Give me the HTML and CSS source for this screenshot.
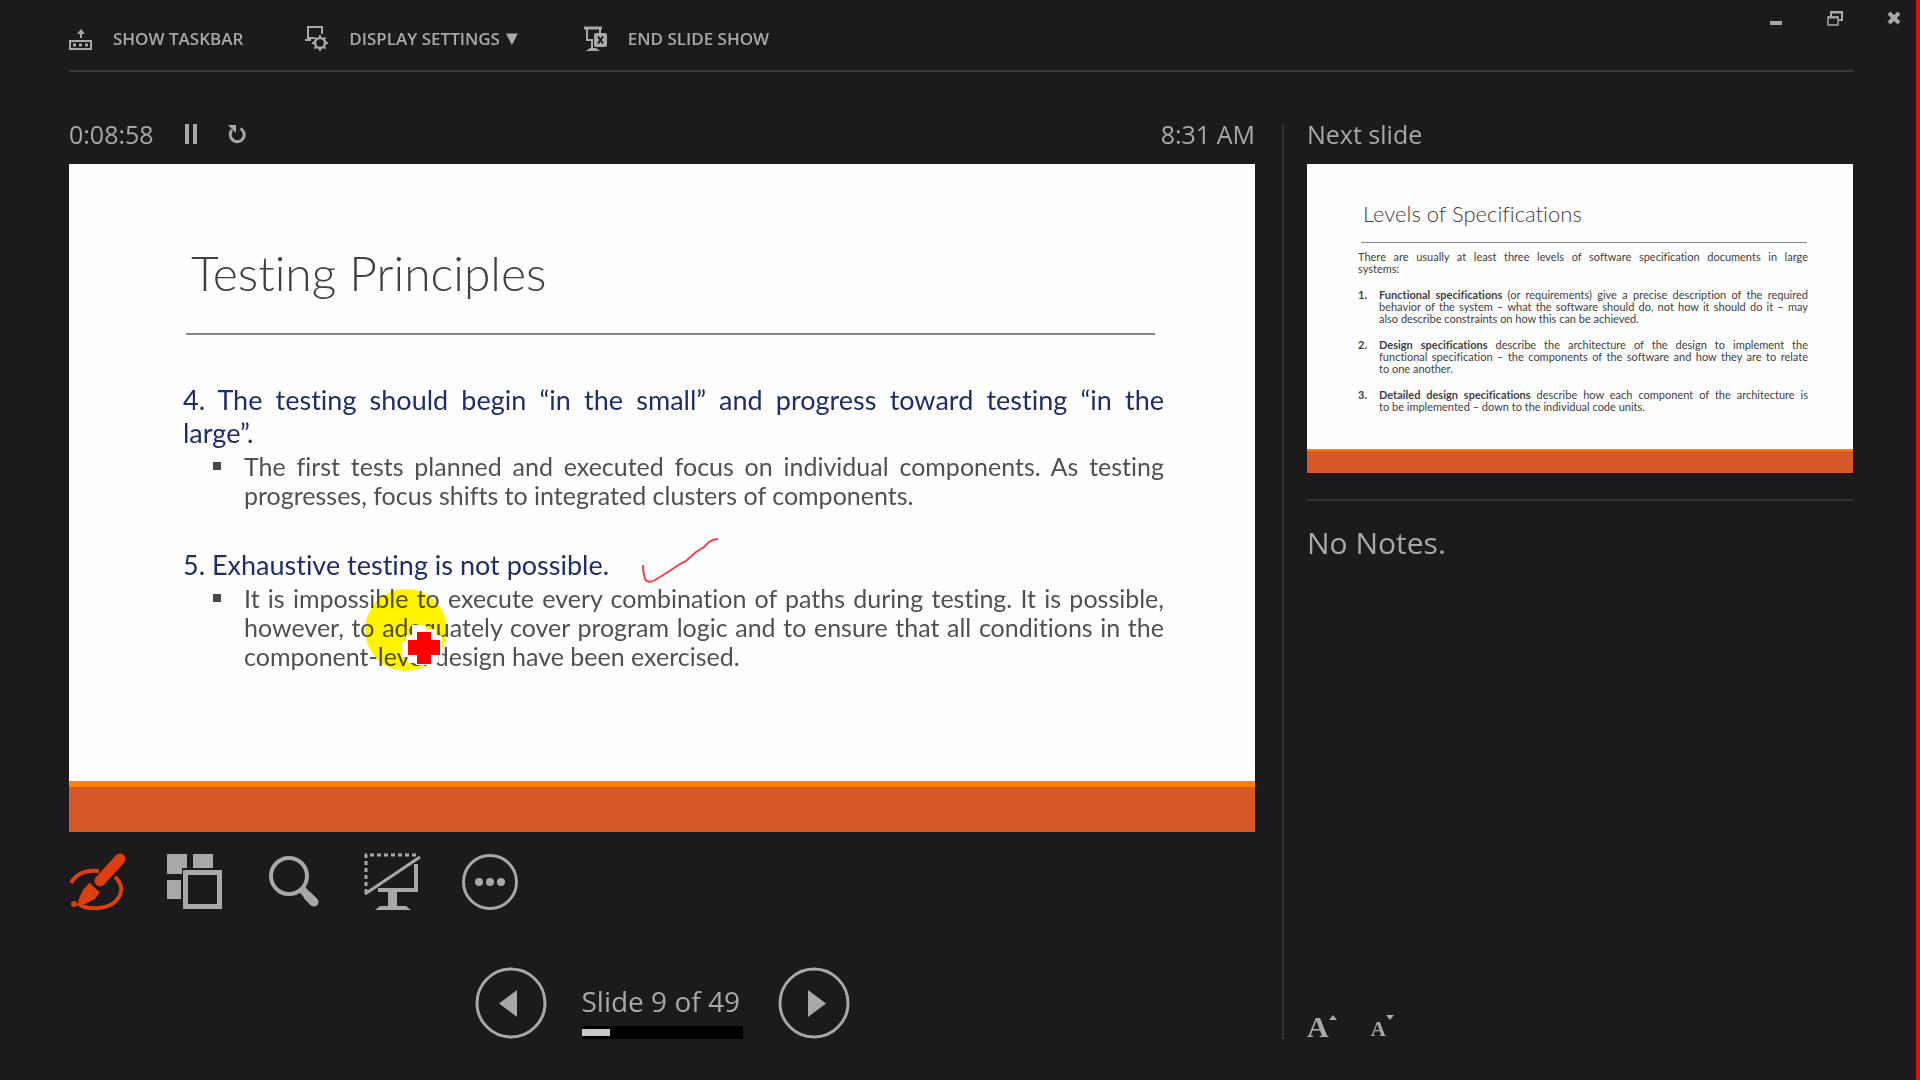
FILE: index.html
```html
<!DOCTYPE html>
<html lang="en">
<head>
<meta charset="utf-8">
<title>Presenter View</title>
<link rel="stylesheet" href="styles.css">
</head>
<body>
<div class="presenter">
  <header class="topbar">
    <nav class="commands" aria-label="Show commands">
      <button class="command" type="button">
        <svg width="24" height="26" viewBox="0 0 24 26" fill="none" stroke="currentColor" stroke-width="2"><path d="M1 15h21v8H1zM12 12V5"/><path d="M12 3l4 5H8z" fill="currentColor" stroke="none"/><path d="M4 19h16" stroke-width="3" stroke-dasharray="3 3"/></svg>
        <span>SHOW TASKBAR</span>
      </button>
      <button class="command" type="button">
        <svg width="24" height="26" viewBox="0 0 24 26" fill="none" stroke="currentColor" stroke-width="2"><path d="M3 11V1h14v7M2 12h7M0 14h6"/><circle cx="15" cy="17" r="5" stroke-width="2.500"/><path d="M15 9v3M15 22v3M7 17h3M20 17h3M9.500 11.500l2 2M18.500 20.500l2 2M9.500 22.500l2-2M18.500 13.500l2-2"/></svg>
        <span>DISPLAY SETTINGS<span class="caret">▼</span></span>
      </button>
      <button class="command" type="button">
        <svg width="24" height="26" viewBox="0 0 24 26" fill="none" stroke="currentColor" stroke-width="2"><path d="M0 2h18" stroke-width="3"/><path d="M3 3v11h6M8 15v7M16 3v4"/><path d="M2 25l4-3h6l4 3z" fill="currentColor" stroke="none"/><rect x="10" y="7" width="13" height="14" rx="2" fill="currentColor" stroke="none"/><path d="M14 10.500l5 7M19 10.500l-5 7" stroke="#1c1a1d"/></svg>
        <span>END SLIDE SHOW</span>
      </button>
    </nav>
    <div class="window-controls">
      <button type="button" aria-label="Minimize"><svg width="16" height="16" viewBox="0 0 16 16"><path d="M2 11h12v4H2z" fill="currentColor"/></svg></button>
      <button type="button" aria-label="Restore"><svg width="16" height="16" viewBox="0 0 16 16" fill="none" stroke="currentColor" stroke-width="1.500"><path d="M1 7h10v8H1z"/><path d="M1 7.500h10M4 6V2h11v8h-3M4 2.500h11" stroke-width="2"/></svg></button>
      <button type="button" aria-label="Close"><svg width="16" height="16" viewBox="0 0 16 16" fill="none" stroke="currentColor" stroke-width="4"><path d="M3 3l10 10M13 3L3 13"/></svg></button>
    </div>
  </header>

  <main class="stage">
    <section class="current">
      <div class="status">
        <span>0:08:58</span>
        <button type="button" aria-label="Pause timer"><svg width="12" height="20" viewBox="0 0 12 20"><path d="M0 0h4v20H0zM8 0h4v20H8z" fill="currentColor"/></svg></button>
        <button type="button" aria-label="Restart timer"><svg width="18" height="20" viewBox="0 0 18 20"><path d="M12.500 4.500A7 7 0 1 1 4 6" fill="none" stroke="currentColor" stroke-width="3"/><path d="M0 1h8v8z" fill="currentColor"/></svg></button>
        <span class="clock">8:31 AM</span>
      </div>

      <article class="slide">
        <svg class="spotlight" width="82" height="82" viewBox="0 0 82 82"><circle cx="41" cy="41" r="41" fill="#fff500"/></svg>
        <h1>Testing Principles</h1>
        <div class="slide-body">
          <h2><span class="full">4. The testing should begin “in the small” and progress toward testing “in the</span> large”.</h2>
          <ul>
            <li><span class="full">The first tests planned and executed focus on individual components. As testing</span> progresses, focus shifts to integrated clusters of components.</li>
          </ul>
          <h2>5. Exhaustive testing is not possible.</h2>
          <ul>
            <li><span class="full">It is impossible to execute every combination of paths during testing. It is possible,</span> <span class="full">however, to adequately cover program logic and to ensure that all conditions in the</span> component-level design have been exercised.</li>
          </ul>
        </div>
        <svg class="ink" width="80" height="50" viewBox="0 0 80 50"><path d="M3 28Q3 36 5 42Q8 47 15 43L28 35L40 27L46 24L56 15L64 10L69 5Q73 2 78 2" fill="none" stroke="#f5404c" stroke-width="2"/></svg>
        <svg class="pen-cursor" width="44" height="44" viewBox="0 0 44 44"><path d="M10 0h14v4h10v6h6v22h-4v6h-8v2H14v-2H6v-6H0V16h4v-6h6z" fill="#fff"/><path d="M15 7h14v8h9v15h-9v9H15v-9H6V15h9z" fill="#f00"/></svg>
      </article>

      <div class="tools">
        <button class="pen" type="button" aria-label="Pen and laser pointer tools"><svg width="58" height="58" viewBox="0 0 58 58" fill="none" stroke="currentColor"><path d="M2 30C7 21 17 17 30 18M46 24C60 37 48 54 30 55C21 56 13 54 9 50" stroke-width="4"/><path d="M51 6L31 28" stroke-width="11" stroke-linecap="round"/><path d="M21 29l11 9-6 8-12 6-5-4 5-11z" fill="currentColor" stroke="none"/><path d="M20 28l13 12" stroke="#1c1a1d" stroke-width="2"/><circle cx="5" cy="51" r="3" fill="currentColor" stroke="none"/></svg></button>
        <button type="button" aria-label="See all slides"><svg width="58" height="58" viewBox="0 0 58 58" fill="currentColor"><path d="M0 1h20v14h-5v6H0zM26 1h20v14H26zM0 27h14v19H0z"/><path d="M18.500 19.500h34v34h-34z" fill="none" stroke="currentColor" stroke-width="5"/></svg></button>
        <button type="button" aria-label="Zoom into the slide"><svg width="58" height="58" viewBox="0 0 58 58" fill="none" stroke="currentColor"><circle cx="24" cy="23" r="18" stroke-width="4"/><path d="M36 35l13 15" stroke-width="8"/><path d="M43 43l6 6" stroke-width="9" stroke-linecap="round"/></svg></button>
        <button type="button" aria-label="Black or unblack slide show"><svg width="58" height="58" viewBox="0 0 58 58" fill="none" stroke="currentColor"><path d="M3 40V2h50" stroke-width="3" stroke-dasharray="4 3"/><path d="M2 41L57 4" stroke-width="3"/><path d="M53 11v26H15" stroke-width="4"/><path d="M25 38h9v15h9l5 4H12l5-4h8z" fill="currentColor" stroke="none"/></svg></button>
        <button type="button" aria-label="More slide show options"><svg width="58" height="58" viewBox="0 0 58 58" fill="currentColor"><circle cx="29" cy="29" r="26.500" fill="none" stroke="currentColor" stroke-width="3"/><circle cx="18" cy="29" r="4"/><circle cx="29" cy="29" r="4"/><circle cx="40" cy="29" r="4"/></svg></button>
      </div>

      <div class="pager">
        <button type="button" aria-label="Previous slide"><svg width="72" height="72" viewBox="0 0 72 72"><circle cx="36" cy="36" r="34" fill="none" stroke="currentColor" stroke-width="3"/><path d="M42 23v27L24 36.500z" fill="currentColor"/></svg></button>
        <div class="position">
          <span>Slide 9 of 49</span>
          <div class="progress"><div class="progress-fill" style="width: 18%"></div></div>
        </div>
        <button type="button" aria-label="Next slide"><svg width="72" height="72" viewBox="0 0 72 72"><circle cx="36" cy="36" r="34" fill="none" stroke="currentColor" stroke-width="3"/><path d="M30 23v27l18-13.500z" fill="currentColor"/></svg></button>
      </div>
    </section>

    <aside class="side">
      <div class="status">Next slide</div>
      <article class="slide preview">
        <h1>Levels of Specifications</h1>
        <div class="slide-body">
          <p><span class="full">There are usually at least three levels of software specification documents in large</span> systems:</p>
          <ol>
            <li><span class="full"><b>Functional specifications</b> (or requirements) give a precise description of the required</span> <span class="full">behavior of the system – what the software should do, not how it should do it – may</span> also describe constraints on how this can be achieved.</li>
            <li><span class="full"><b>Design specifications</b> describe the architecture of the design to implement the</span> <span class="full">functional specification – the components of the software and how they are to relate</span> to one another.</li>
            <li><span class="full"><b>Detailed design specifications</b> describe how each component of the architecture is</span> to be implemented – down to the individual code units.</li>
          </ol>
        </div>
      </article>
      <div class="notes">No Notes.</div>
      <div class="text-size">
        <button type="button" aria-label="Make the text larger"><span class="larger">A</span><svg width="8" height="6" viewBox="0 0 8 6"><path d="M0 5h8L4 0z" fill="currentColor"/></svg></button>
        <button type="button" aria-label="Make the text smaller"><span class="smaller">A</span><svg width="8" height="6" viewBox="0 0 8 6"><path d="M0 0h8L4 5z" fill="currentColor"/></svg></button>
      </div>
    </aside>
  </main>
</div>
</body>
</html>
```
FILE: styles.css
```css
* { box-sizing: border-box; }

body {
  margin: 0;
  background: #1c1a1d;
  color: #a9a7a9;
  font-family: "Open Sans", "Noto Sans", sans-serif;
}

button {
  display: flex;
  align-items: center;
  padding: 0;
  border: 0;
  background: none;
  color: inherit;
  font: inherit;
  cursor: pointer;
}

svg { display: block; }

.presenter {
  display: flex;
  flex-direction: column;
  min-height: 100vh;
  padding: 0 63px 41px 69px;
  border-right: 4px solid #f00;
}

.topbar {
  display: flex;
  justify-content: space-between;
  align-items: flex-start;
  height: 72px;
  border-bottom: 2px solid #373937;
}

.commands {
  display: flex;
  gap: 62px;
  padding-top: 26px;
  font-size: 17px;
  font-weight: 600;
  line-height: 26px;
}

.command { gap: 20px; }

.caret {
  margin-left: 2px;
  font-size: 20px;
  line-height: 20px;
}

.window-controls {
  display: flex;
  gap: 43px;
  padding-top: 10px;
  margin-right: -49px;
}

.stage {
  flex: 1;
  display: grid;
  grid-template-columns: minmax(0, 1213fr) minmax(0, 571fr);
  padding-top: 52px;
}

.current {
  display: flex;
  flex-direction: column;
  padding-right: 27px;
}

.side {
  display: flex;
  flex-direction: column;
  padding-left: 23px;
  border-left: 2px solid #343235;
}

.status {
  display: flex;
  align-items: center;
  gap: 31px;
  height: 40px;
  padding-bottom: 20px;
  font-size: 25px;
}

.clock { margin-left: auto; }

.slide {
  position: relative;
  aspect-ratio: 1186 / 668;
  padding: 80px 91px 0 114px;
  border-bottom: 45px solid #d55826;
  background: linear-gradient(#ff8208, #ff8208) bottom / 100% 6px no-repeat #fefefe;
  color: #505052;
  font-family: Lato, "Open Sans", sans-serif;
  font-variant-ligatures: none;
}

.slide h1 {
  margin: 0 9px 0 3px;
  padding: 0 0 31px 5px;
  border-bottom: 2px solid #8a8585;
  color: #404042;
  font-size: 48px;
  font-weight: 300;
  line-height: 58px;
}

.slide-body { padding-top: 48px; }

.slide h2 {
  margin: 0;
  color: #1f2f66;
  font-size: 27px;
  font-weight: 400;
  line-height: 33px;
}

.slide ul {
  margin: 0 0 38px;
  padding: 3px 0 0 61px;
  list-style: none;
  font-size: 25px;
  line-height: 29px;
}

.slide ul li::before {
  content: "";
  position: absolute;
  width: 8px;
  height: 8px;
  margin: 10px 0 0 -31px;
  background: #48484a;
}

.full {
  display: block;
  text-align: justify;
  text-align-last: justify;
  white-space: nowrap;
}

.spotlight, .ink, .pen-cursor { position: absolute; }
.spotlight { left: 296px; top: 425px; mix-blend-mode: multiply; }
.ink { left: 571px; top: 373px; }
.pen-cursor { left: 333px; top: 461px; }

.preview {
  aspect-ratio: 545 / 308;
  padding: 35px 45px 0 51px;
  border-bottom-width: 22px;
  background-size: 100% 2px;
}

.preview h1 {
  margin: 0 1px 0 3px;
  padding: 0 0 13px 2px;
  border-bottom-width: 1px;
  font-size: 22px;
  line-height: 30px;
}

.preview .slide-body {
  padding-top: 8px;
  color: #404042;
  font-size: 11px;
  line-height: 12px;
}

.preview p { margin: 0; }

.preview ol {
  margin: 0;
  padding: 0;
  list-style: none;
  counter-reset: item;
}

.preview li {
  display: grid;
  grid-template-columns: 21px minmax(0, 1fr);
  margin-top: 14px;
  counter-increment: item;
}

.preview li::before {
  content: counter(item) ".";
  grid-row: 1 / span 3;
  font-weight: 700;
}

.preview li .full { grid-column: 2; }

.tools {
  display: flex;
  gap: 40px;
  padding-top: 21px;
}

.pen { color: #dc4012; }

.pager {
  display: flex;
  justify-content: center;
  gap: 35px;
  margin-top: auto;
}

.position {
  display: flex;
  flex-direction: column;
  justify-content: space-between;
  min-width: 161px;
  padding-top: 14px;
  font-size: 28px;
  line-height: 40px;
}

.progress {
  height: 13px;
  padding: 3px 0;
  background: #000;
}

.progress-fill {
  height: 7px;
  background: #c9c7c9;
}

.notes {
  flex: 1;
  margin-top: 26px;
  padding-top: 19px;
  border-top: 2px solid #343235;
  font-size: 30px;
  line-height: 46px;
}

.text-size {
  display: flex;
  align-items: flex-start;
  gap: 34px;
  height: 24px;
  font-family: "Liberation Serif", serif;
  font-weight: 700;
}

.text-size button { align-items: baseline; }
.text-size svg { align-self: flex-start; }
.larger { font-size: 30px; line-height: 24px; }
.smaller { font-size: 21px; line-height: 28px; }
```
